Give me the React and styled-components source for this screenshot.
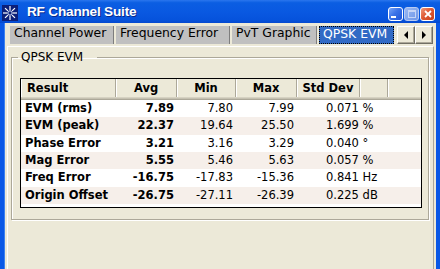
import styled, { createGlobalStyle } from 'styled-components';

const GlobalStyle = createGlobalStyle`
  html, body {
    margin: 0;
    padding: 0;
    background: #ECE9D8;
  }
  body {
    font-family: "DejaVu Sans", Verdana, sans-serif;
  }
`;

const tabs = [
  { label: 'Channel Power', width: 104 },
  { label: 'Frequency Error', width: 114 },
  { label: 'PvT Graphic', width: 85 },
  { label: 'QPSK EVM', width: 75, active: true },
];

const columns = [
  { label: 'Result', width: 95, align: 'left' },
  { label: 'Avg', width: 61 },
  { label: 'Min', width: 59 },
  { label: 'Max', width: 61 },
  { label: 'Std Dev', width: 63 },
  { label: '', width: 28 },
  { label: '', width: 33, last: true },
];

const rows = [
  ['EVM (rms)', '7.89', '7.80', '7.99', '0.071 %'],
  ['EVM (peak)', '22.37', '19.64', '25.50', '1.699 %'],
  ['Phase Error', '3.21', '3.16', '3.29', '0.040 °'],
  ['Mag Error', '5.55', '5.46', '5.63', '0.057 %'],
  ['Freq Error', '-16.75', '-17.83', '-15.36', '0.841 Hz'],
  ['Origin Offset', '-26.75', '-27.11', '-26.39', '0.225 dB'],
];

const gridCols = columns.map((c) => c.width + 'px').join(' ');

const Window = styled.div`
  width: 440px;
  height: 269px;
  display: flex;
  flex-direction: column;
  overflow: hidden;
  background: #ECE9D8;
`;

const TitleBar = styled.div`
  flex: none;
  height: 23px;
  box-sizing: border-box;
  padding: 3px 5px 0 2px;
  display: flex;
  align-items: center;
  background: linear-gradient(to bottom, #2a76ee 0%, #0b5ee2 12%, #0958e1 55%, #0653dc 85%, #0449cf 100%);
`;

const AppIcon = styled.svg`
  flex: none;
  width: 16px;
  height: 16px;
`;

const Title = styled.div`
  margin-left: 9px;
  flex: 1;
  color: #fff;
  font-family: "Liberation Sans", Arial, sans-serif;
  font-weight: bold;
  font-size: 13.6px;
  letter-spacing: -0.2px;
  text-shadow: 1px 1px 0 #0a2a8a;
  margin-top: -3px;
`;

const CaptionButton = styled.div`
  flex: none;
  width: 15px;
  height: 14px;
  box-sizing: border-box;
  margin-left: 1px;
  align-self: flex-end;
  margin-bottom: 2px;
  border: 1px solid ${(p) => (p.$disabled ? '#b8cbf3' : '#fff')};
  border-radius: 3px;
  background: ${(p) =>
    p.$close
      ? 'linear-gradient(135deg, #ef9a7e 0%, #df5a35 45%, #c7401c 100%)'
      : p.$disabled
      ? 'linear-gradient(135deg, #9ab8f3 0%, #6e96e8 100%)'
      : 'linear-gradient(135deg, #7aa6f7 0%, #3b73e8 45%, #1f55d6 100%)'};
  display: flex;
  align-items: center;
  justify-content: center;
`;

const MinBar = styled.div`
  width: 5px;
  height: 2px;
  background: #fff;
  align-self: flex-end;
  margin: 0 4px 2px 0;
`;

const MaxBox = styled.div`
  width: 6px;
  height: 5px;
  border: 1px solid #c6d5f6;
  border-top-width: 2px;
`;

const Frame = styled.div`
  flex: 1;
  min-height: 0;
  display: flex;
  flex-direction: column;
  border-left: 4px solid #0a58e6;
  border-right: 4px solid #0a58e6;
  box-shadow: inset 1px 0 0 #3c82f0;
`;

const TabStrip = styled.div`
  flex: none;
  height: 18px;
  margin-top: 3px;
  padding-left: 6px;
  display: flex;
  gap: 2px;
`;

const Tab = styled.div`
  flex: none;
  width: ${(p) => p.$width}px;
  height: 18px;
  box-sizing: border-box;
  padding: ${(p) => (p.$active ? '1px 0 0 4px' : '0 0 0 4px')};
  font-size: 12.4px;
  line-height: 14px;
  white-space: nowrap;
  overflow: hidden;
  color: ${(p) => (p.$active ? '#fff' : '#000')};
  background: ${(p) => (p.$active ? '#316AC5' : '#c0c0c0')};
  box-shadow: ${(p) => (p.$active ? 'none' : 'inset -1px 0 0 #7e7e7e')};
  outline: ${(p) => (p.$active ? '1px dotted #000' : 'none')};
  outline-offset: -1px;
`;

const ArrowGroup = styled.div`
  display: flex;
  margin-left: 1px;
`;

const ArrowButton = styled.div`
  width: 18px;
  height: 18px;
  box-sizing: border-box;
  background: #ECE9D8;
  border-top: 1px solid #fff;
  border-left: 1px solid #fff;
  border-right: 1px solid #716f64;
  border-bottom: 1px solid #716f64;
  box-shadow: inset -1px -1px 0 #aca899;
  display: flex;
  align-items: center;
  justify-content: center;
`;

const Arrow = styled.div`
  width: 0;
  height: 0;
  border-top: 4px solid transparent;
  border-bottom: 4px solid transparent;
  ${(p) => (p.$dir === 'left' ? 'border-right: 4px solid #000;' : 'border-left: 4px solid #000;')}
`;

const Panel = styled.div`
  flex: 1;
  margin: 2px 2px 0 3px;
  padding: 3px 4px 0 3px;
  border-top: 1px solid #fff;
  border-left: 1px solid #fff;
  border-right: 1px solid #aca899;
`;

const Group = styled.fieldset`
  margin: 0;
  padding: 14px 6px 11px 8px;
  min-width: 0;
  border: 1px solid #aca899;
  box-shadow: 1px 1px 0 #fff, inset 1px 1px 0 #fff;
`;

const Legend = styled.legend`
  margin-left: -2px;
  padding: 0 14px 0 3px;
  font-size: 12px;
  line-height: 14px;
  color: #000;
`;

const ListView = styled.div`
  width: 402px;
  height: 130px;
  box-sizing: border-box;
  border: 1px solid #000;
  background: #fff;
  overflow: hidden;
  font-size: 11.5px;
`;

const HeaderRow = styled.div`
  display: grid;
  grid-template-columns: ${gridCols};
  height: 21px;
  background: #ECE9D8;
  box-shadow: inset 0 -1px 0 #aca899, inset 0 -2px 0 #c5c1b1, inset 0 -3px 0 #d6d2c2;
`;

const HeaderCell = styled.div`
  height: 18px;
  box-sizing: border-box;
  line-height: 18px;
  font-weight: bold;
  text-align: ${(p) => (p.$align === 'left' ? 'left' : 'center')};
  padding-left: ${(p) => (p.$align === 'left' ? '6px' : '0')};
  border-right: ${(p) => (p.$last ? 'none' : '1px solid #aca899')};
  box-shadow: inset 1px 0 0 #fff;
  white-space: nowrap;
`;

const Row = styled.div`
  display: grid;
  grid-template-columns: ${gridCols};
  height: 17.33px;
  line-height: 17.33px;
  background: ${(p) => (p.$alt ? '#F6EFEA' : '#fff')};
`;

const Cell = styled.div`
  padding: ${(p) => (p.$name ? '0 0 0 4px' : p.$unit ? '0 0 0 29px' : '0 3px 0 0')};
  text-align: ${(p) => (p.$name || p.$unit ? 'left' : 'right')};
  font-weight: ${(p) => (p.$bold ? 'bold' : 'normal')};
  grid-column: ${(p) => (p.$unit ? 'span 2' : 'auto')};
  white-space: nowrap;
  color: #000;
`;

const rays = [0, 45, 90, 135, 180, 225, 270, 315];

const App = () => (
  <>
    <GlobalStyle />
    <Window>
      <TitleBar>
        <AppIcon viewBox="0 0 16 16">
          <rect x="0" y="0" width="16" height="16" fill="#0c1f78" />
          {rays.map((a) => {
            const r = (a * Math.PI) / 180;
            return (
              <line
                key={a}
                x1={8 + Math.cos(r) * 3}
                y1={8 + Math.sin(r) * 3}
                x2={8 + Math.cos(r) * 7}
                y2={8 + Math.sin(r) * 7}
                stroke="#fff"
                strokeWidth="1.2"
              />
            );
          })}
          <circle cx="8" cy="8" r="2.2" fill="none" stroke="#dfe8ff" strokeWidth="1" />
        </AppIcon>
        <Title>RF Channel Suite</Title>
        <CaptionButton>
          <MinBar />
        </CaptionButton>
        <CaptionButton $disabled>
          <MaxBox />
        </CaptionButton>
        <CaptionButton $close>
          <svg width="8" height="8" viewBox="0 0 8 8">
            <path d="M1 1 L7 7 M7 1 L1 7" stroke="#fff" strokeWidth="1.8" />
          </svg>
        </CaptionButton>
      </TitleBar>

      <Frame>
        <TabStrip>
          {tabs.map((t) => (
            <Tab key={t.label} $width={t.width} $active={t.active}>
              {t.label}
            </Tab>
          ))}
          <ArrowGroup>
            <ArrowButton>
              <Arrow $dir="left" />
            </ArrowButton>
            <ArrowButton>
              <Arrow $dir="right" />
            </ArrowButton>
          </ArrowGroup>
        </TabStrip>

        <Panel>
          <Group>
            <Legend>QPSK EVM</Legend>
            <ListView>
              <HeaderRow>
                {columns.map((c, i) => (
                  <HeaderCell key={i} $align={c.align} $last={c.last}>
                    {c.label}
                  </HeaderCell>
                ))}
              </HeaderRow>
              {rows.map((r, i) => (
                <Row key={r[0]} $alt={i % 2 === 1}>
                  <Cell $name $bold>{r[0]}</Cell>
                  <Cell $bold>{r[1]}</Cell>
                  <Cell>{r[2]}</Cell>
                  <Cell>{r[3]}</Cell>
                  <Cell $unit>{r[4]}</Cell>
                  <Cell />
                </Row>
              ))}
            </ListView>
          </Group>
        </Panel>
      </Frame>
    </Window>
  </>
);

export default App;
